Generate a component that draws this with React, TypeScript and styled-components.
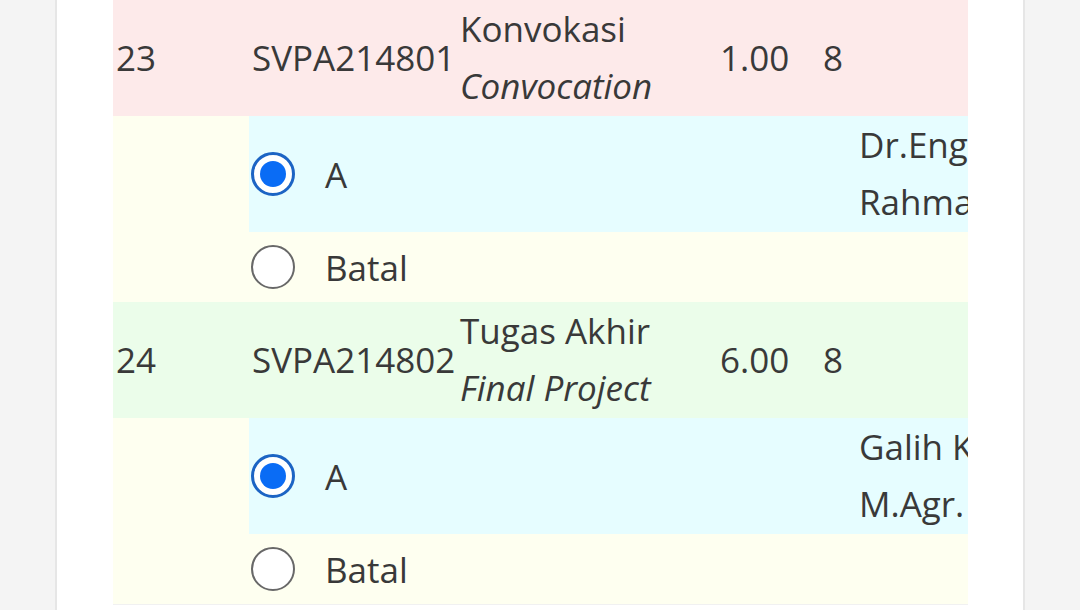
import styled, { createGlobalStyle } from 'styled-components';

const GlobalStyle = createGlobalStyle`
  html, body {
    margin: 0;
    padding: 0;
    background: #f4f4f4;
    font-family: 'Open Sans', 'Noto Sans', sans-serif;
    color: #393939;
  }
`;

const tones = {
  danger: '#fdeaea',
  success: '#ebfdea',
  info: '#e6fdff',
  warning: '#fefff0',
};

type Tone = keyof typeof tones;

const Page = styled.div`
  height: 610px;
  overflow: hidden;
  padding-left: 55px;
`;

const Card = styled.div`
  width: 910px;
  min-height: 610px;
  background: #ffffff;
  border-left: 2px solid #e6e6e6;
  border-right: 2px solid #e6e6e6;
  padding-left: 56px;
`;

const Table = styled.div`
  width: 855px;
  overflow: hidden;
  border-bottom: 1px solid #f1f1f1;
  font-size: 35px;
  line-height: 57px;
`;

const Inner = styled.div`
  width: 1100px;
`;

const MainRow = styled.div<{ $tone: Tone }>`
  display: grid;
  grid-template-columns: 136px 208px 260px 103px 36px 1fr;
  align-items: center;
  background: ${({ $tone }) => tones[$tone]};
`;

const Cell = styled.div`
  padding: 0 3px 2px;
  white-space: nowrap;
`;

const Line = styled.div<{ $italic?: boolean }>`
  font-style: ${({ $italic }) => ($italic ? 'italic' : 'normal')};
`;

const SubRow = styled.div<{ $height?: number }>`
  display: grid;
  grid-template-columns: 136px 1fr;
  min-height: ${({ $height }) => ($height ? `${$height}px` : 'auto')};
  background: ${tones.warning};
`;

const Spacer = styled.div`
  background: ${tones.warning};
`;

const OptionArea = styled.div<{ $tone: Tone }>`
  display: grid;
  grid-template-columns: 607px 1fr;
  align-items: center;
  background: ${({ $tone }) => tones[$tone]};
`;

const Option = styled.label`
  display: flex;
  align-items: center;
  gap: 30px;
  padding-left: 2px;
`;

const RadioMark = styled.span<{ $checked?: boolean }>`
  width: 44px;
  height: 44px;
  border-radius: 50%;
  box-sizing: border-box;
  background: #ffffff;
  border: ${({ $checked }) => ($checked ? '3px solid #1c64c4' : '2.5px solid #686868')};
  display: flex;
  align-items: center;
  justify-content: center;

  &::after {
    content: '';
    display: ${({ $checked }) => ($checked ? 'block' : 'none')};
    width: 26px;
    height: 26px;
    border-radius: 50%;
    background: #0a6cf5;
  }
`;

interface Course {
  no: number;
  code: string;
  name: string;
  nameEn: string;
  sks: string;
  sem: number;
  tone: Tone;
  lecturer: [string, string];
}

const courses: Course[] = [
  {
    no: 23,
    code: 'SVPA214801',
    name: 'Konvokasi',
    nameEn: 'Convocation',
    sks: '1.00',
    sem: 8,
    tone: 'danger',
    lecturer: ['Dr.Eng.', 'Rahmat Hidayat'],
  },
  {
    no: 24,
    code: 'SVPA214802',
    name: 'Tugas Akhir',
    nameEn: 'Final Project',
    sks: '6.00',
    sem: 8,
    tone: 'success',
    lecturer: ['Galih Kusuma,', 'M.Agr.'],
  },
];

function CourseBlock({ course }: { course: Course }) {
  return (
    <>
      <MainRow $tone={course.tone}>
        <Cell>{course.no}</Cell>
        <Cell>{course.code}</Cell>
        <Cell>
          <Line>{course.name}</Line>
          <Line $italic>{course.nameEn}</Line>
        </Cell>
        <Cell>{course.sks}</Cell>
        <Cell>{course.sem}</Cell>
        <Cell />
      </MainRow>
      <SubRow>
        <Spacer />
        <OptionArea $tone="info">
          <Option>
            <RadioMark $checked />
            A
          </Option>
          <Cell>
            <Line>{course.lecturer[0]}</Line>
            <Line>{course.lecturer[1]}</Line>
          </Cell>
        </OptionArea>
      </SubRow>
      <SubRow $height={70}>
        <Spacer />
        <Option>
          <RadioMark />
          Batal
        </Option>
      </SubRow>
    </>
  );
}

export default function App() {
  return (
    <>
      <GlobalStyle />
      <Page>
        <Card>
          <Table>
            <Inner>
              {courses.map((c) => (
                <CourseBlock key={c.no} course={c} />
              ))}
            </Inner>
          </Table>
        </Card>
      </Page>
    </>
  );
}
